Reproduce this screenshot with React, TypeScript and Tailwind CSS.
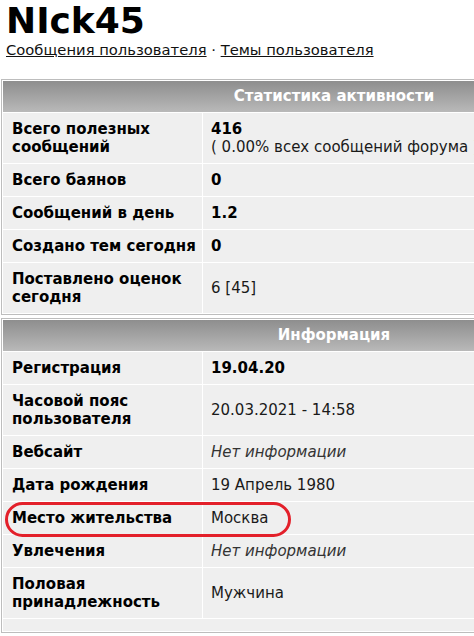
import React from "react";

type Row = { label: string[]; value: React.ReactNode };

const font = { fontFamily: '"DejaVu Sans", Verdana, sans-serif' };

function Panel({ title, rows, tail }: { title: string; rows: Row[]; tail?: boolean }) {
  return (
    <div className="ml-[1px] w-[666px] border border-[#bdbdbd] bg-white p-px">
      <div className="flex flex-col gap-px">
        <div className="flex h-[31px] items-center justify-center bg-gradient-to-b from-[#8e8e8e] to-[#b9b9b9] text-[15px] font-bold text-white">
          {title}
        </div>
        {rows.map((r, i) => (
          <div key={i} className="grid grid-cols-[199px_1fr] gap-px">
            <div className="flex min-h-[32px] flex-col justify-center bg-[#efefef] py-[7px] pl-[9px] pr-[2px] text-[15px] font-bold leading-[18px] text-black">
              {r.label.map((l, j) => (
                <span key={j} className="whitespace-nowrap">{l}</span>
              ))}
            </div>
            <div className="flex min-h-[32px] flex-col justify-center bg-[#efefef] px-[8px] py-[7px] text-[15px] leading-[18px] text-[#1a1a1a]">
              {r.value}
            </div>
          </div>
        ))}
        {tail && <div className="h-[12px] bg-[#efefef]" />}
      </div>
    </div>
  );
}

export default function App() {
  const stats: Row[] = [
    {
      label: ["Всего полезных", "сообщений"],
      value: (
        <>
          <span className="font-bold text-black">416</span>
          <span className="whitespace-nowrap">( 0.00% всех сообщений форума )</span>
        </>
      ),
    },
    { label: ["Всего баянов"], value: <span className="font-bold text-black">0</span> },
    { label: ["Сообщений в день"], value: <span className="font-bold text-black">1.2</span> },
    { label: ["Создано тем сегодня"], value: <span className="font-bold text-black">0</span> },
    { label: ["Поставлено оценок", "сегодня"], value: <span>6 [45]</span> },
  ];
  const info: Row[] = [
    { label: ["Регистрация"], value: <span className="font-bold text-black">19.04.20</span> },
    { label: ["Часовой пояс", "пользователя"], value: <span>20.03.2021 - 14:58</span> },
    { label: ["Вебсайт"], value: <span className="italic text-[#333]">Нет информации</span> },
    { label: ["Дата рождения"], value: <span>19 Апрель 1980</span> },
    { label: ["Место жительства"], value: <span>Москва</span> },
    { label: ["Увлечения"], value: <span className="italic text-[#333]">Нет информации</span> },
    { label: ["Половая", "принадлежность"], value: <span>Мужчина</span> },
  ];
  return (
    <div className="relative h-[636px] w-full overflow-hidden bg-white" style={font}>
      <div className="px-[6px] pt-[1px]">
        <h1 className="text-[36px] font-bold leading-[40px] text-black">NIck45</h1>
        <div className="text-[14.75px] leading-[18px] text-[#111]">
          <span className="underline">Сообщения пользователя</span>
          <span> · </span>
          <span className="underline">Темы пользователя</span>
        </div>
      </div>
      <div className="mt-[20px] flex flex-col gap-[3px]">
        <Panel title="Статистика активности" rows={stats} />
        <Panel title="Информация" rows={info} tail />
        <div className="ml-[1px] h-[10px] w-[666px] border border-[#bdbdbd] bg-white" />
      </div>
      <div className="absolute left-[5px] top-[502px] h-[35px] w-[286px] rounded-[18px] border-[3px] border-[#e3202a]" />
    </div>
  );
}
